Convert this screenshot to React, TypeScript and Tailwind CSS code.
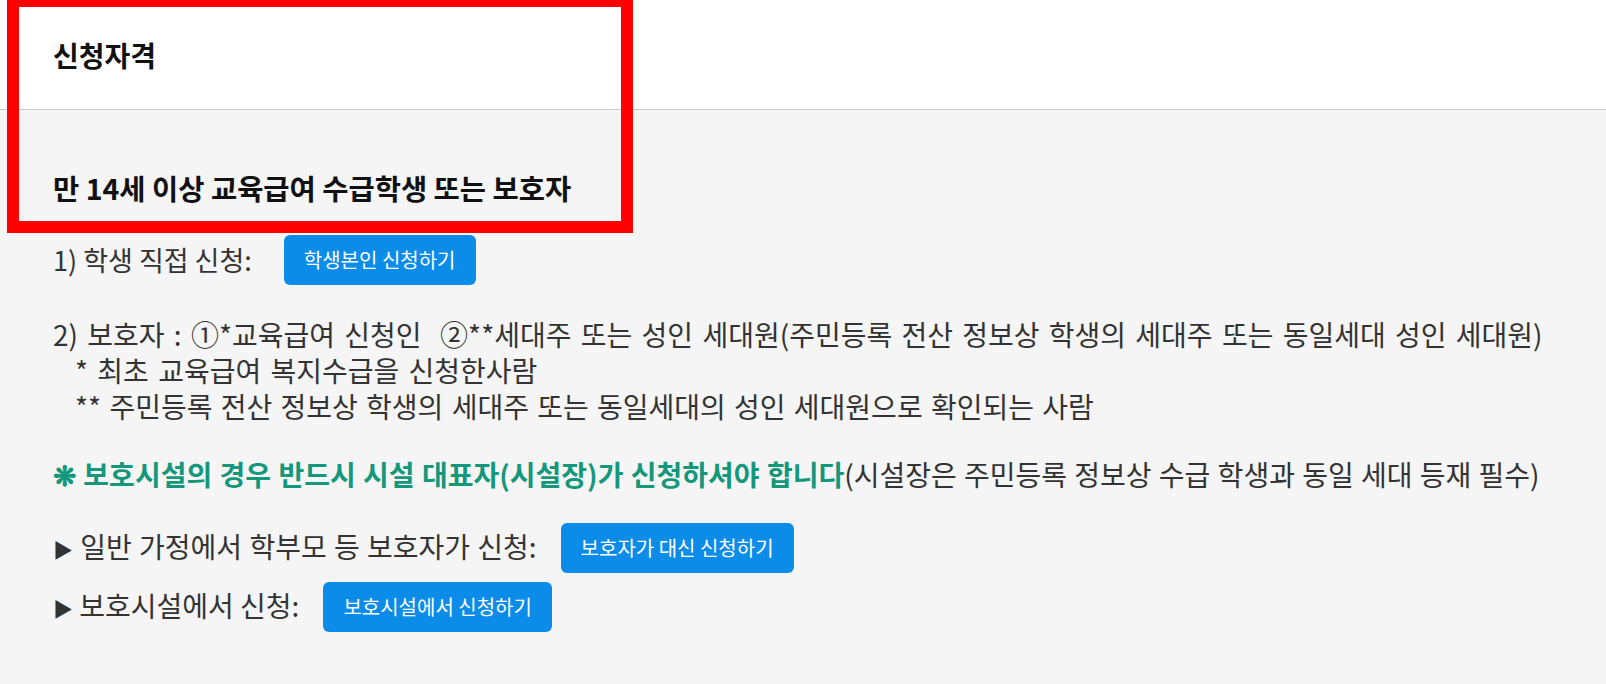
export default function App() {
  return (
    <div className="relative min-h-screen bg-[#f5f5f5] font-['Noto_Sans_CJK_KR','Noto_Sans',sans-serif] text-[#333]">
      {/* Header */}
      <div className="h-[110px] bg-white border-b border-[#cccccc] flex items-center pl-[53px]">
        <h2 className="text-[28px] font-bold text-[#111] leading-none">신청자격</h2>
      </div>

      {/* Body */}
      <div className="pl-[53px] pt-[60px]">
        <h3 className="text-[28.5px] font-bold text-[#111] leading-[36px]">만 14세 이상 교육급여 수급학생 또는 보호자</h3>

        <div className="mt-[29px] flex items-center h-[50px]">
          <span className="text-[27px] leading-[36px]">1) 학생 직접 신청:</span>
          <button className="ml-[32px] h-[50px] px-[20px] rounded-md bg-[#0b8ce9] text-white text-[20px]">
            학생본인 신청하기
          </button>
        </div>

        <div className="mt-[31px] text-[28px] leading-[36px] whitespace-pre-wrap [word-spacing:3px]">
          <p>2) 보호자 : ①*교육급여 신청인  ②**세대주 또는 성인 세대원(주민등록 전산 정보상 학생의 세대주 또는 동일세대 성인 세대원)</p>
          <p className="pl-[22px]">* 최초 교육급여 복지수급을 신청한사람</p>
          <p className="pl-[22px] [word-spacing:2px]">** 주민등록 전산 정보상 학생의 세대주 또는 동일세대의 성인 세대원으로 확인되는 사람</p>
        </div>

        <p className="mt-[32px] text-[28px] leading-[36px] [word-spacing:1px]">
          <span className="font-bold text-[#14977a]">❋ 보호시설의 경우 반드시 시설 대표자(시설장)가 신청하셔야 합니다</span>
          (시설장은 주민등록 정보상 수급 학생과 동일 세대 등재 필수)
        </p>

        <div className="mt-[31px] flex items-center h-[50px]">
          <span className="text-[28px] leading-[36px] [word-spacing:1px]">
            <span className="text-[20px] align-middle">▶</span> 일반 가정에서 학부모 등 보호자가 신청:
          </span>
          <button className="ml-[24px] h-[50px] px-[20px] rounded-md bg-[#0b8ce9] text-white text-[20px]">
            보호자가 대신 신청하기
          </button>
        </div>

        <div className="mt-[9px] flex items-center h-[50px]">
          <span className="text-[28px] leading-[36px]">
            <span className="text-[20px] align-middle">▶</span> 보호시설에서 신청:
          </span>
          <button className="ml-[24px] h-[50px] px-[20px] rounded-md bg-[#0b8ce9] text-white text-[20px]">
            보호시설에서 신청하기
          </button>
        </div>
      </div>

      {/* Red highlight annotation */}
      <div className="pointer-events-none absolute left-[7px] top-[-5px] w-[626px] h-[238px] border-[12px] border-[#ff0000]"></div>
    </div>
  );
}
